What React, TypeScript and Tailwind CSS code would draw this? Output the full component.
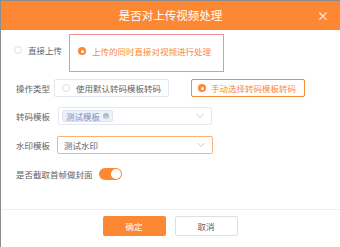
import React from "react";

const font = { fontFamily: '"Noto Sans CJK SC", "Noto Sans", sans-serif' };

function Chevron() {
  return (
    <svg width="8" height="5" viewBox="0 0 8 5" className="absolute right-[7px] top-1/2 -translate-y-1/2">
      <path d="M0.5 0.5 L4 4 L7.5 0.5" fill="none" stroke="#c0c4cc" strokeWidth="0.9" />
    </svg>
  );
}

export default function App() {
  return (
    <div
      className="w-[340px] h-[247px] bg-white border-l border-t border-[#8c8c8c] flex flex-col overflow-hidden"
      style={font}
    >
      <div className="h-[29px] bg-[#fd8834] flex items-center justify-center relative text-white text-[11.5px] shrink-0">
        <span>是否对上传视频处理</span>
        <span className="absolute right-[11px] top-[9px] text-[12px] leading-[12px]">×</span>
      </div>

      <div className="flex pl-[13px] pt-[4px]">
        <div className="flex items-center h-[12px] mt-[10px] gap-[6px]">
          <span className="w-[8px] h-[8px] rounded-full border border-[#dcdfe6] bg-white" />
          <span className="text-[8.5px] leading-[12px] text-[#606266]">直接上传</span>
        </div>
        <div className="ml-[7px] w-[155px] h-[38px] border border-[#f39090] pl-[8px] pt-[10px]">
          <div className="flex items-center h-[12px] gap-[6px]">
            <span className="w-[8px] h-[8px] rounded-full bg-[#fd8834] flex items-center justify-center">
              <span className="w-[3px] h-[3px] rounded-full bg-white" />
            </span>
            <span className="text-[8.5px] leading-[12px] text-[#fd8834]">上传的同时直接对视频进行处理</span>
          </div>
        </div>
      </div>

      <div className="flex items-center pl-[15px] mt-[7px] h-[18px]">
        <span className="w-[38px] text-[8.5px] text-[#606266]">操作类型</span>
        <div className="w-[115px] h-[18px] border border-[#e4e7ed] rounded-[2px] flex items-center pl-[7px] gap-[6px]">
          <span className="w-[8px] h-[8px] rounded-full border border-[#dcdfe6] bg-white" />
          <span className="text-[8.5px] text-[#606266]">使用默认转码模板转码</span>
        </div>
        <div className="ml-[22px] w-[114px] h-[18px] border border-[#fd8834] rounded-[2px] flex items-center pl-[6px] gap-[5px]">
          <span className="w-[8px] h-[8px] rounded-full bg-[#fd8834] flex items-center justify-center">
            <span className="w-[3px] h-[3px] rounded-full bg-white" />
          </span>
          <span className="text-[8.5px] text-[#fd8834]">手动选择转码模板转码</span>
        </div>
      </div>

      <div className="flex items-center pl-[15px] mt-[10px] h-[18px]">
        <span className="w-[42px] text-[8.5px] text-[#606266]">转码模板</span>
        <div className="relative w-[154px] h-[18px] border border-[#e4e7ed] rounded-[2px] flex items-center pl-[3px]">
          <span className="h-[12px] bg-[#edf1f9] border border-[#dde4f2] rounded-[2px] flex items-center pl-[3px] pr-[3px] gap-[3px]">
            <span className="text-[8.5px] leading-[10px] text-[#7d8fc0]">测试模板</span>
            <span className="w-[6px] h-[6px] rounded-full bg-[#b4b9c4] flex items-center justify-center text-white text-[5px] leading-[5px]">×</span>
          </span>
          <Chevron />
        </div>
      </div>

      <div className="flex items-center pl-[15px] mt-[11px] h-[18px]">
        <span className="w-[41px] text-[8.5px] text-[#606266]">水印模板</span>
        <div className="relative w-[156px] h-[18px] border border-[#fdb07a] rounded-[2px] flex items-center pl-[6px]">
          <span className="text-[8.5px] text-[#606266]">测试水印</span>
          <Chevron />
        </div>
      </div>

      <div className="flex items-center pl-[15px] mt-[14px] h-[12px]">
        <span className="text-[8.5px] text-[#606266]">是否截取首帧做封面</span>
        <span className="ml-[6px] w-[23px] h-[12px] rounded-full bg-[#fd8834] relative">
          <span className="absolute right-[1px] top-[1px] w-[10px] h-[10px] rounded-full bg-white" />
        </span>
      </div>

      <div className="mt-[29px] border-t border-[#eef0f3]" />

      <div className="flex justify-center gap-[9px] mt-[6px] pr-[1px]">
        <button className="w-[63px] h-[20px] bg-[#fd8834] rounded-[2px] text-white text-[8.5px] flex items-center justify-center">
          确定
        </button>
        <button className="w-[63px] h-[20px] bg-white border border-[#dcdfe6] rounded-[2px] text-[#606266] text-[8.5px] flex items-center justify-center">
          取消
        </button>
      </div>
    </div>
  );
}
